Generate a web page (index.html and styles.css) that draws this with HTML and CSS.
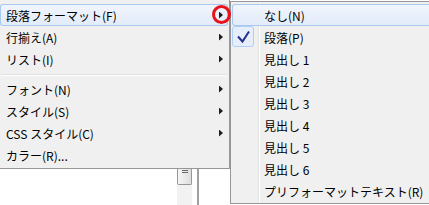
FILE: index.html
```html
<!DOCTYPE html>
<html lang="ja">
<head>
    <meta charset="UTF-8">
    <title>段落フォーマット メニュー</title>
    <link rel="stylesheet" href="styles.css">
</head>
<body>

    <div class="screen">

        <!-- Parent context menu and the page behind it -->
        <div class="left">
            <ul class="menu main">
                <li class="item hot"><span>段落フォーマット(F)</span><i class="arrow"></i></li>
                <li class="item"><span>行揃え(A)</span><i class="arrow"></i></li>
                <li class="item"><span>リスト(I)</span><i class="arrow"></i></li>
                <li class="sep"></li>
                <li class="item"><span>フォント(N)</span><i class="arrow"></i></li>
                <li class="item"><span>スタイル(S)</span><i class="arrow"></i></li>
                <li class="item"><span>CSS スタイル(C)</span><i class="arrow"></i></li>
                <li class="item"><span>カラー(R)...</span></li>
            </ul>
            <div class="page">
                <div class="scrollbar">
                    <div class="thumb"><span class="grip"></span></div>
                </div>
                <div class="frame"></div>
            </div>
        </div>

        <!-- Submenu -->
        <ul class="menu sub">
            <li class="item hot"><span class="ico"></span><span>なし(N)</span></li>
            <li class="item">
                <span class="ico checked">
                    <svg width="20" height="19" viewBox="0 0 20 19"><path d="M5 9.5 L9.5 14.5 L16 4.5" fill="none" stroke="#24318c" stroke-width="2"/></svg>
                </span>
                <span>段落(P)</span>
            </li>
            <li class="item"><span class="ico"></span><span>見出し 1</span></li>
            <li class="item"><span class="ico"></span><span>見出し 2</span></li>
            <li class="item"><span class="ico"></span><span>見出し 3</span></li>
            <li class="item"><span class="ico"></span><span>見出し 4</span></li>
            <li class="item"><span class="ico"></span><span>見出し 5</span></li>
            <li class="item"><span class="ico"></span><span>見出し 6</span></li>
            <li class="item"><span class="ico"></span><span>プリフォーマットテキスト(R)</span></li>
        </ul>

        <!-- Red annotation ring over the submenu arrow -->
        <span class="mark"></span>
    </div>

</body>
</html>
```

FILE: styles.css
```css
/* General */
* {
    box-sizing: border-box;
}

body {
    margin: 0;
    width: 429px;
    height: 205px;
    overflow: hidden;
    background: #fff;
    font-family: "Noto Sans CJK JP", "Liberation Sans", sans-serif;
    font-size: 12px;
    color: #000;
}

.screen {
    position: relative;
    display: flex;
    align-items: flex-start;
    height: 205px;
}

/* Left column: menu + page behind */
.left {
    flex: none;
    width: 230px;
    height: 205px;
    display: flex;
    flex-direction: column;
}

.menu {
    list-style: none;
    margin: 0;
    background: #f0f0f0;
}

.main {
    padding: 4px 1px 2px 0;
    border-right: 1px solid #979797;
    border-bottom: 1px solid #979797;
}

.item {
    height: 22px;
    display: flex;
    align-items: center;
    border-radius: 3px;
    white-space: nowrap;
}

.main .item {
    justify-content: space-between;
    padding: 0 5px 0 6px;
}

/* Hovered item */
.hot {
    background: linear-gradient(#f1f6fd, #e3ebf9);
    box-shadow: inset 0 0 0 1px #a9c8ef;
}

.sep {
    height: 8px;
    margin: 0 1px;
    background: linear-gradient(transparent 4px, #e0e0e0 4px, #e0e0e0 5px, #fff 5px, #fff 6px, transparent 6px);
}

.arrow {
    width: 4px;
    height: 7px;
    background: #1e1e1e;
    clip-path: polygon(0 0, 100% 50%, 0 100%);
}

/* Page content peeking out under the menu */
.page {
    flex: 1;
    display: flex;
    padding-left: 177px;
    background: #fff;
}

.scrollbar {
    width: 15px;
    background: #f2f2f2;
}

.thumb {
    height: 16px;
    border: 1px solid #979797;
    border-top: none;
    border-radius: 0 0 2px 2px;
    background: linear-gradient(to right, #f6f6f6, #dedede);
    display: flex;
    justify-content: center;
    padding-top: 1px;
}

.grip {
    width: 6px;
    height: 3px;
    border-top: 1px solid #6b6b6b;
    border-bottom: 1px solid #6b6b6b;
}

.frame {
    width: 2px;
    margin-left: 5px;
    background: #a0a0a0;
}

/* Submenu (runs on past the right edge of the shot) */
.sub {
    flex: 1;
    min-width: 0;
    overflow: hidden;
    height: 203px;
    margin-top: 1px;
    padding: 2px 0 1px 1px;
    border: 1px solid #979797;
    border-right: none;
    background: linear-gradient(to right, #f0f0f0 27px, #e2e3e3 27px, #e2e3e3 28px, #fff 28px, #fff 29px, #f0f0f0 29px);
}

.sub .item {
    margin-right: -6px;
}

.ico {
    flex: none;
    align-self: flex-start;
    width: 22px;
    height: 21px;
    margin-right: 10px;
}

.checked {
    display: flex;
    align-items: center;
    justify-content: center;
    border: 1px solid #aecff7;
    border-radius: 3px;
    background: #e6eefb;
}

/* Red ring */
.mark {
    position: absolute;
    left: 212px;
    top: 5px;
    width: 19px;
    height: 19px;
    border: 3px solid #e8121a;
    border-radius: 50%;
}
```
